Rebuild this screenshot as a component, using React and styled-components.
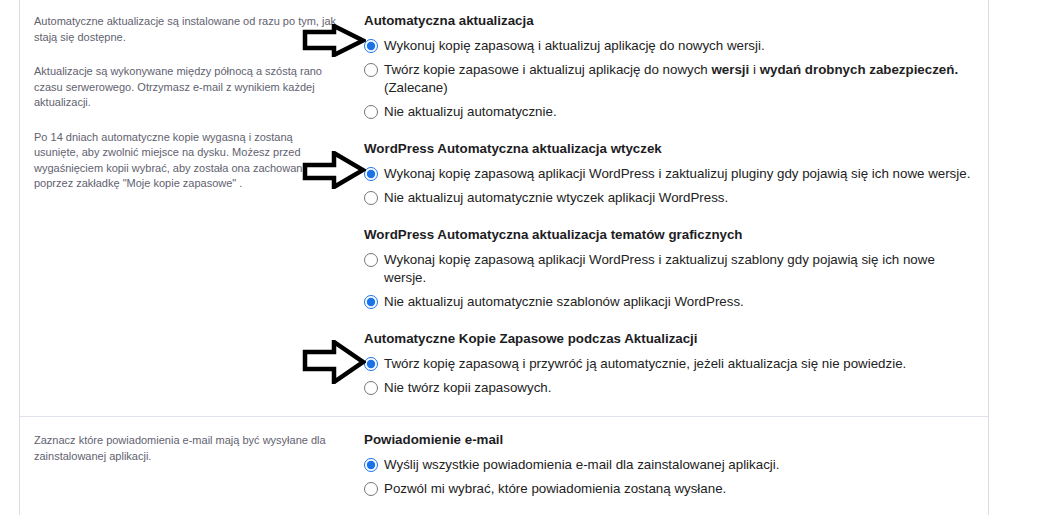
import styled, { createGlobalStyle } from "styled-components";

const GlobalStyle = createGlobalStyle`
  html, body {
    margin: 0;
    padding: 0;
    background: #ffffff;
    font-family: "Liberation Sans", Arial, sans-serif;
  }
`;

const Card = styled.div`
  margin-left: 19px;
  width: 968px;
  border-left: 1px solid #dcdcdc;
  border-right: 1px solid #dcdcdc;
  background: #fff;
`;

const Section = styled.div`
  display: grid;
  grid-template-columns: 344px 1fr;
  padding: ${(p) => (p.$first ? "12px" : "14px")} 0 19px;
  border-bottom: ${(p) => (p.$last ? "none" : "1px solid #dfe4ec")};
`;

const Aside = styled.div`
  padding: 2px 14px 0;
`;

const Note = styled.p`
  margin: 0 0 19px;
  width: 305px;
  font-size: 11px;
  line-height: 15.5px;
  color: #62626f;
`;

const Settings = styled.div`
  display: flex;
  flex-direction: column;
  gap: 19px;
  padding-right: 12px;
`;

const Group = styled.div`
  display: flex;
  flex-direction: column;
`;

const Heading = styled.h3`
  margin: 0 0 7px;
  font-size: 13.33px;
  line-height: 18px;
  font-weight: 700;
  color: #1d1d1f;
`;

const Options = styled.div`
  display: flex;
  flex-direction: column;
  gap: 6px;
`;

const Option = styled.label`
  position: relative;
  display: flex;
  align-items: flex-start;
  gap: 6px;
  font-size: 13.33px;
  line-height: 18px;
  color: #222;
`;

const Radio = styled.input.attrs({ type: "radio" })`
  flex: none;
  width: 14px;
  height: 14px;
  margin: 2px 0 0;
  accent-color: #1a73e8;
`;

const ArrowBox = styled.svg`
  position: absolute;
  left: -62px;
  top: ${(p) => p.$top}px;
  pointer-events: none;
`;

function Arrow({ top = -13, height = 30, body = [6, 22] }) {
  const mid = height / 2;
  const [b1, b2] = body;
  return (
    <ArrowBox $top={top} width="64" height={height + 4} viewBox={`0 0 64 ${height + 4}`}>
      <polygon
        points={`3,${b1 + 2} 32,${b1 + 2} 32,2 61,${mid + 2} 32,${height + 2} 32,${b2 + 2} 3,${b2 + 2}`}
        fill="#fff"
        stroke="#000"
        strokeWidth="4.5"
        strokeLinejoin="miter"
      />
    </ArrowBox>
  );
}

function Choice({ name, checked, arrow, children }) {
  return (
    <Option>
      {arrow}
      <Radio name={name} defaultChecked={checked} />
      <span>{children}</span>
    </Option>
  );
}

export default function App() {
  return (
    <>
      <GlobalStyle />
      <Card>
        <Section $first>
          <Aside>
            <Note>Automatyczne aktualizacje są instalowane od razu po tym, jak stają się dostępne.</Note>
            <Note>
              Aktualizacje są wykonywane między północą a szóstą rano czasu serwerowego. Otrzymasz e-mail z
              wynikiem każdej aktualizacji.
            </Note>
            <Note>
              Po 14 dniach automatyczne kopie wygasną i zostaną
              <br />
              usunięte, aby zwolnić miejsce na dysku. Możesz przed wygaśnięciem kopii wybrać, aby została ona
              zachowana poprzez zakładkę "Moje kopie zapasowe" .
            </Note>
          </Aside>
          <Settings>
            <Group>
              <Heading>Automatyczna aktualizacja</Heading>
              <Options>
                <Choice name="app" checked arrow={<Arrow top={-13} height={29} body={[6, 22]} />}>
                  Wykonuj kopię zapasową i aktualizuj aplikację do nowych wersji.
                </Choice>
                <Choice name="app">
                  Twórz kopie zapasowe i aktualizuj aplikację do nowych <b>wersji</b> i{" "}
                  <b>wydań drobnych zabezpieczeń.</b> (Zalecane)
                </Choice>
                <Choice name="app">Nie aktualizuj automatycznie.</Choice>
              </Options>
            </Group>
            <Group>
              <Heading>WordPress Automatyczna aktualizacja wtyczek</Heading>
              <Options>
                <Choice name="plugins" checked arrow={<Arrow top={-14} height={34} body={[12, 25]} />}>
                  Wykonaj kopię zapasową aplikacji WordPress i zaktualizuj pluginy gdy pojawią się ich nowe wersje.
                </Choice>
                <Choice name="plugins">Nie aktualizuj automatycznie wtyczek aplikacji WordPress.</Choice>
              </Options>
            </Group>
            <Group>
              <Heading>WordPress Automatyczna aktualizacja tematów graficznych</Heading>
              <Options>
                <Choice name="themes">
                  Wykonaj kopię zapasową aplikacji WordPress i zaktualizuj szablony gdy pojawią się ich nowe wersje.
                </Choice>
                <Choice name="themes" checked>
                  Nie aktualizuj automatycznie szablonów aplikacji WordPress.
                </Choice>
              </Options>
            </Group>
            <Group>
              <Heading>Automatyczne Kopie Zapasowe podczas Aktualizacji</Heading>
              <Options>
                <Choice name="backup" checked arrow={<Arrow top={-15} height={40} body={[10, 27]} />}>
                  Twórz kopię zapasową i przywróć ją automatycznie, jeżeli aktualizacja się nie powiedzie.
                </Choice>
                <Choice name="backup">Nie twórz kopii zapasowych.</Choice>
              </Options>
            </Group>
          </Settings>
        </Section>
        <Section $last>
          <Aside>
            <Note>Zaznacz które powiadomienia e-mail mają być wysyłane dla zainstalowanej aplikacji.</Note>
          </Aside>
          <Settings>
            <Group>
              <Heading>Powiadomienie e-mail</Heading>
              <Options>
                <Choice name="mail" checked>
                  Wyślij wszystkie powiadomienia e-mail dla zainstalowanej aplikacji.
                </Choice>
                <Choice name="mail">Pozwól mi wybrać, które powiadomienia zostaną wysłane.</Choice>
              </Options>
            </Group>
          </Settings>
        </Section>
      </Card>
    </>
  );
}
